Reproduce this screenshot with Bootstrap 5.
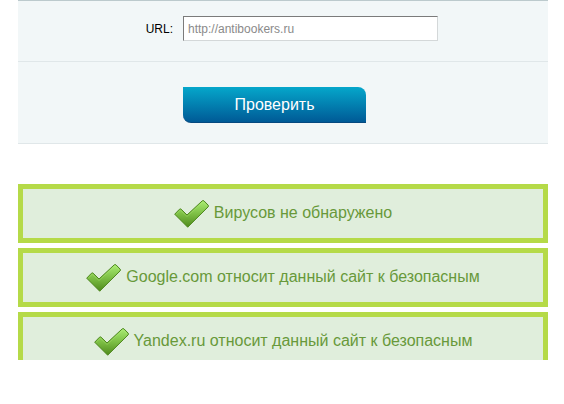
<!DOCTYPE html>
<html lang="ru">
<head>
<meta charset="utf-8">
<meta name="viewport" content="width=device-width, initial-scale=1">
<title>Проверка сайта</title>
<link href="https://cdn.jsdelivr.net/npm/bootstrap@5.3.0/dist/css/bootstrap.min.css" rel="stylesheet">
<style>
body { font-family: "Liberation Sans", Arial, sans-serif; background: #fff; }
.page { padding: 0 16px 0 18px; }
.check-form { background: #f2f7f8; border-top: 1px solid #bccacd; margin-bottom: 40px; }
.form-line { border-bottom: 1px solid #e0e7e9; gap: 10px; }
.url-line { padding: 15px 0 20px; }
.submit-line { padding: 25px 0 20px; }
.label-col { flex: 0 0 155px; text-align: right; font-size: 12px; line-height: 20px; color: #000; }
.url-input { width: 255px; height: 25px; padding: 0 4px; font-size: 12px; line-height: 20px; color: #8a8a8a; border-radius: 0; border: 1px solid #d4d8d9; border-top-color: #7b7b7b; border-left-color: #7b7b7b; }
.btn-check-site, .btn-check-site:hover { width: 183px; height: 36px; padding: 0; border: 0; border-bottom: 1px solid #06497f; border-radius: 0 8px; font-size: 16px; line-height: 34px; color: #fff; background: linear-gradient(#05a7cb, #005a96); }
.results { gap: 5px; }
.result { border: 5px solid #b5da48; background: #e0eedc; height: 59px; gap: 5px; padding-top: 11px; font-size: 16px; line-height: 26px; color: #68993a; }
.result-cut { height: 48px; border-bottom: 0; }
.tick { width: 35px; height: 28px; flex: none; }
</style>
<script src="https://cdn.jsdelivr.net/npm/bootstrap@5.3.0/dist/js/bootstrap.bundle.min.js"></script>
</head>
<body>
<svg width="0" height="0" class="position-absolute" aria-hidden="true">
  <defs>
    <linearGradient id="tickFill" x1="0" y1="0" x2="0" y2="1">
      <stop offset="0" stop-color="#a8ec72"/>
      <stop offset=".5" stop-color="#7dbf45"/>
      <stop offset="1" stop-color="#4f8a1c"/>
    </linearGradient>
    <symbol id="tick" viewBox="0 0 35 28">
      <path d="M.7 14.2 5.5 9.2Q6.3 8.5 7.1 9.2L13 15 28.2.9Q29.1.2 30 .9L34.2 5.2Q34.8 6 34.2 6.8L13.7 27.2Z" fill="url(#tickFill)" stroke="#4c861c" stroke-linejoin="round"/>
      <path d="M2.2 14.2 6.3 10.2 13 16.5 29.1 1.8 33 6" fill="none" stroke="#bdf080" stroke-opacity=".3"/>
    </symbol>
  </defs>
</svg>
<main class="page">
  <form class="check-form">
    <div class="form-line url-line d-flex align-items-center">
      <label class="label-col" for="url">URL:</label>
      <input class="form-control url-input" type="text" id="url" value="http://antibookers.ru">
    </div>
    <div class="form-line submit-line d-flex">
      <div class="label-col"></div>
      <button class="btn btn-check-site" type="button">Проверить</button>
    </div>
  </form>
  <section class="results d-flex flex-column">
    <div class="result d-flex align-items-start justify-content-center">
      <svg class="tick" aria-hidden="true"><use href="#tick"/></svg>
      <span>Вирусов не обнаружено</span>
    </div>
    <div class="result d-flex align-items-start justify-content-center">
      <svg class="tick" aria-hidden="true"><use href="#tick"/></svg>
      <span>Google.com относит данный сайт к безопасным</span>
    </div>
    <div class="result result-cut d-flex align-items-start justify-content-center">
      <svg class="tick" aria-hidden="true"><use href="#tick"/></svg>
      <span>Yandex.ru относит данный сайт к безопасным</span>
    </div>
  </section>
</main>
</body>
</html>
